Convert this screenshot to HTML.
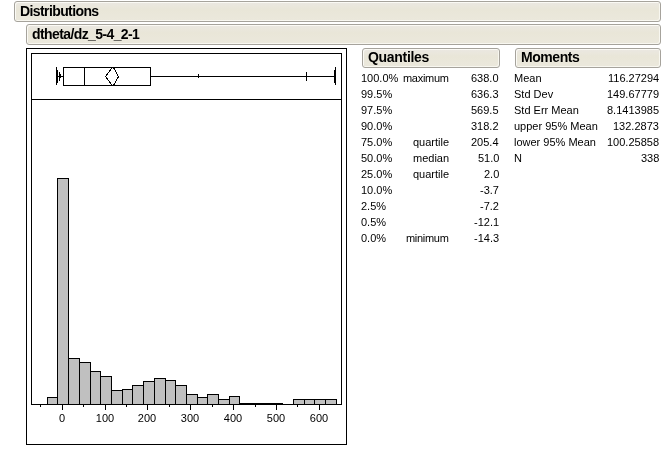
<!DOCTYPE html>
<html><head><meta charset="utf-8"><style>
body *{will-change:transform;}
html,body{margin:0;padding:0;background:#fff;width:665px;height:452px;overflow:hidden;position:relative;font-family:"Liberation Sans",sans-serif;}
.hdr{position:absolute;box-sizing:border-box;border:1px solid #a6a39c;border-radius:3px;background:linear-gradient(#ebe8e2,#e9e6d8 40%,#ebe8dc);box-shadow:inset 1px 1px 0 #fbfaf5, inset -1px -1px 0 #f8f7f0;font-weight:bold;color:#000;}
.hdr span{position:absolute;white-space:nowrap;font-size:14px;letter-spacing:-0.6px;line-height:16px;}
.r{position:absolute;font-size:11px;line-height:13px;white-space:nowrap;color:#000;}
.lab{position:absolute;top:412px;width:40px;text-align:center;font-size:11px;line-height:13px;color:#000;}
svg{position:absolute;left:0;top:0;}
</style></head><body>
<div class="hdr" style="left:14px;top:1px;width:647px;height:21px;"><span style="left:5px;top:1px;">Distributions</span></div>
<div class="hdr" style="left:26px;top:24px;width:635px;height:21px;"><span style="left:5px;top:1px;">dtheta/dz_5-4_2-1</span></div>
<div class="hdr" style="left:362px;top:48px;width:138px;height:20px;"><span style="left:5px;top:0px;letter-spacing:-0.3px;">Quantiles</span></div>
<div class="hdr" style="left:515px;top:48px;width:146px;height:20px;"><span style="left:5px;top:0px;letter-spacing:-0.45px;">Moments</span></div>
<svg width="665" height="452" shape-rendering="crispEdges">
<g fill="none" stroke="#000" stroke-width="1">
<rect x="26.5" y="48.5" width="320" height="396"/>
<polyline points="31.5,404.5 31.5,53.5 341.5,53.5 341.5,404.5"/>
<line x1="31" y1="99.5" x2="342" y2="99.5"/>
</g>
<g fill="#c0c0c0" stroke="#000" stroke-width="1">
<rect x="47.5" y="397.5" width="10" height="7"/>
<rect x="57.5" y="178.5" width="11" height="226"/>
<rect x="68.5" y="358.5" width="11" height="46"/>
<rect x="79.5" y="362.5" width="11" height="42"/>
<rect x="90.5" y="371.5" width="10" height="33"/>
<rect x="100.5" y="376.5" width="11" height="28"/>
<rect x="111.5" y="390.5" width="11" height="14"/>
<rect x="122.5" y="389.5" width="10" height="15"/>
<rect x="132.5" y="385.5" width="11" height="19"/>
<rect x="143.5" y="381.5" width="11" height="23"/>
<rect x="154.5" y="378.5" width="11" height="26"/>
<rect x="165.5" y="380.5" width="10" height="24"/>
<rect x="175.5" y="385.5" width="11" height="19"/>
<rect x="186.5" y="394.5" width="11" height="10"/>
<rect x="197.5" y="397.5" width="10" height="7"/>
<rect x="207.5" y="394.5" width="11" height="10"/>
<rect x="218.5" y="399.5" width="11" height="5"/>
<rect x="229.5" y="396.5" width="10" height="8"/>
<rect x="239.5" y="403.5" width="11" height="1"/>
<rect x="250.5" y="403.5" width="11" height="1"/>
<rect x="261.5" y="403.5" width="11" height="1"/>
<rect x="272.5" y="403.5" width="10" height="1"/>
<rect x="293.5" y="399.5" width="11" height="5"/>
<rect x="304.5" y="399.5" width="10" height="5"/>
<rect x="314.5" y="399.5" width="11" height="5"/>
<rect x="325.5" y="399.5" width="11" height="5"/>
</g>
<g stroke="#000" stroke-width="1" fill="none">
<line x1="31" y1="404.5" x2="342" y2="404.5"/>
<line x1="40.5" y1="405" x2="40.5" y2="407"/>
<line x1="62.5" y1="405" x2="62.5" y2="410"/>
<line x1="83.5" y1="405" x2="83.5" y2="407"/>
<line x1="105.5" y1="405" x2="105.5" y2="410"/>
<line x1="126.5" y1="405" x2="126.5" y2="407"/>
<line x1="147.5" y1="405" x2="147.5" y2="410"/>
<line x1="169.5" y1="405" x2="169.5" y2="407"/>
<line x1="190.5" y1="405" x2="190.5" y2="410"/>
<line x1="212.5" y1="405" x2="212.5" y2="407"/>
<line x1="233.5" y1="405" x2="233.5" y2="410"/>
<line x1="255.5" y1="405" x2="255.5" y2="407"/>
<line x1="276.5" y1="405" x2="276.5" y2="410"/>
<line x1="297.5" y1="405" x2="297.5" y2="407"/>
<line x1="319.5" y1="405" x2="319.5" y2="410"/>
<line x1="56" y1="76.5" x2="336" y2="76.5"/>
<rect x="63.5" y="67.5" width="87" height="18" fill="#fff"/>
<line x1="84.5" y1="67" x2="84.5" y2="86"/>
<line x1="56.5" y1="67" x2="56.5" y2="85"/>
<line x1="57.5" y1="70" x2="57.5" y2="83"/>
<line x1="59.5" y1="72" x2="59.5" y2="81"/>
<line x1="60.5" y1="74" x2="60.5" y2="78"/>
<line x1="198.5" y1="74" x2="198.5" y2="78"/>
<line x1="306.5" y1="72" x2="306.5" y2="81"/>
<line x1="334.5" y1="70" x2="334.5" y2="83"/>
<line x1="335.5" y1="67" x2="335.5" y2="85"/>
<polyline points="112.2,67.5 105.5,76.5 112.2,85.5"/>
<polyline points="113.5,67.5 118.5,76.5 113.5,85.5"/>
</g>
</svg>
<div class="r" style="top:72px;left:361px">100.0%</div>
<div class="r ra" style="top:72px;right:216px; letter-spacing:-0.3px;">maximum</div>
<div class="r ra" style="top:72px;right:166px">638.0</div>
<div class="r" style="top:88px;left:361px">99.5%</div>
<div class="r ra" style="top:88px;right:166px">636.3</div>
<div class="r" style="top:104px;left:361px">97.5%</div>
<div class="r ra" style="top:104px;right:166px">569.5</div>
<div class="r" style="top:120px;left:361px">90.0%</div>
<div class="r ra" style="top:120px;right:166px">318.2</div>
<div class="r" style="top:136px;left:361px">75.0%</div>
<div class="r ra" style="top:136px;right:216px;">quartile</div>
<div class="r ra" style="top:136px;right:166px">205.4</div>
<div class="r" style="top:152px;left:361px">50.0%</div>
<div class="r ra" style="top:152px;right:216px;">median</div>
<div class="r ra" style="top:152px;right:166px">51.0</div>
<div class="r" style="top:168px;left:361px">25.0%</div>
<div class="r ra" style="top:168px;right:216px;">quartile</div>
<div class="r ra" style="top:168px;right:166px">2.0</div>
<div class="r" style="top:184px;left:361px">10.0%</div>
<div class="r ra" style="top:184px;right:166px">-3.7</div>
<div class="r" style="top:200px;left:361px">2.5%</div>
<div class="r ra" style="top:200px;right:166px">-7.2</div>
<div class="r" style="top:216px;left:361px">0.5%</div>
<div class="r ra" style="top:216px;right:166px">-12.1</div>
<div class="r" style="top:232px;left:361px">0.0%</div>
<div class="r ra" style="top:232px;right:216px; letter-spacing:-0.3px;">minimum</div>
<div class="r ra" style="top:232px;right:166px">-14.3</div>
<div class="r" style="top:72px;left:514px">Mean</div>
<div class="r ra" style="top:72px;right:6px">116.27294</div>
<div class="r" style="top:88px;left:514px">Std Dev</div>
<div class="r ra" style="top:88px;right:6px">149.67779</div>
<div class="r" style="top:104px;left:514px">Std Err Mean</div>
<div class="r ra" style="top:104px;right:6px">8.1413985</div>
<div class="r" style="top:120px;left:514px">upper 95% Mean</div>
<div class="r ra" style="top:120px;right:6px">132.2873</div>
<div class="r" style="top:136px;left:514px">lower 95% Mean</div>
<div class="r ra" style="top:136px;right:6px">100.25858</div>
<div class="r" style="top:152px;left:514px">N</div>
<div class="r ra" style="top:152px;right:6px">338</div>
<div class="lab" style="left:42.0px">0</div>
<div class="lab" style="left:85.0px">100</div>
<div class="lab" style="left:127.0px">200</div>
<div class="lab" style="left:170.0px">300</div>
<div class="lab" style="left:213.0px">400</div>
<div class="lab" style="left:256.0px">500</div>
<div class="lab" style="left:299.0px">600</div>
</body></html>
